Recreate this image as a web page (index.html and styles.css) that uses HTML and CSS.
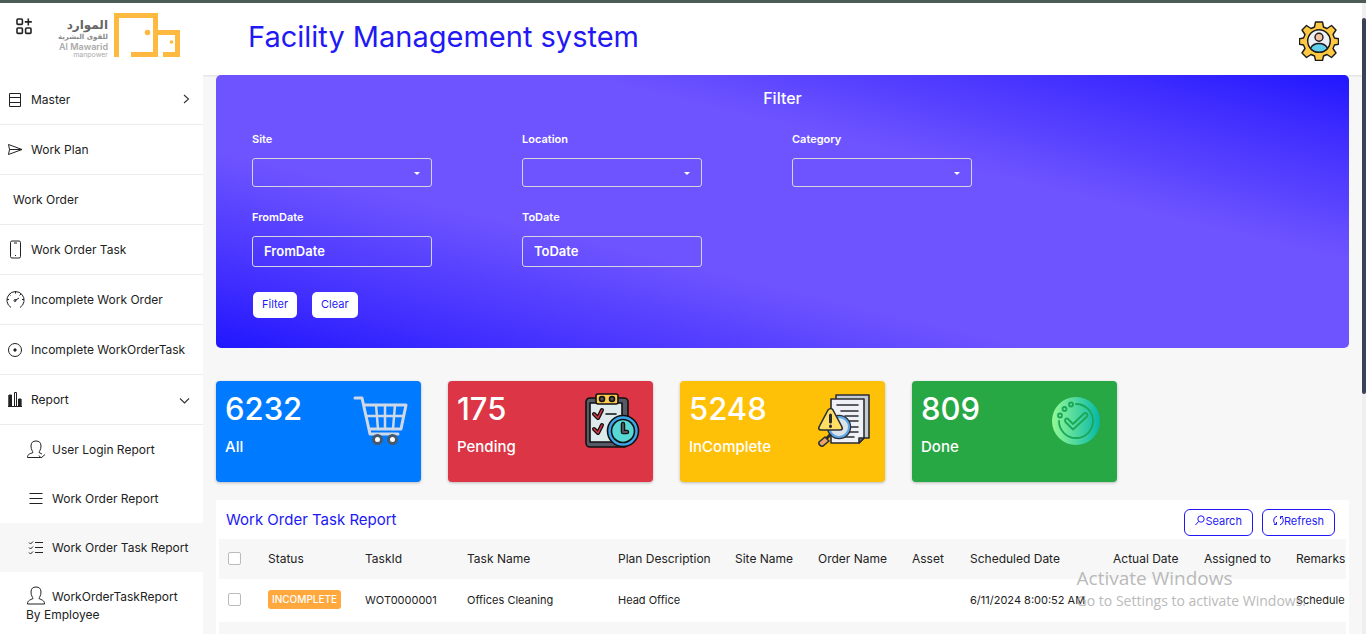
FILE: index.html
```html
<!DOCTYPE html>
<html lang="en">
<head>
<meta charset="utf-8">
<title>Facility Management system</title>
<link rel="stylesheet" href="styles.css">
</head>
<body>
<div class="app">
  <header class="header">
    <button class="menu-toggle" type="button" aria-label="Toggle menu">
      <svg width="16" height="17" viewBox="0 0 16 17" fill="none" stroke="#222" stroke-width="1.6"><rect x="1" y="1" width="5.4" height="5.4" rx="1"/><rect x="1" y="10" width="5.4" height="5.4" rx="1"/><rect x="9.6" y="10" width="5.4" height="5.4" rx="1"/><path d="M12.3 .4v7M8.8 3.9h7"/></svg>
    </button>
    <svg class="logo" width="134" height="48" viewBox="0 0 134 48" role="img" aria-label="Al Mawarid manpower">
      <g text-anchor="end">
        <text x="61" y="18" class="logo-ar">الموارد</text>
        <text x="61" y="28" class="logo-ar-sub">للقوى البشرية</text>
        <text x="61" y="39" class="logo-en">Al Mawarid</text>
        <text x="61" y="46" class="logo-en-sub">manpower</text>
      </g>
      <path d="M67 46V2h44v17h22v27h-17v-5h12V24h-17v22H84v-5h22V7H72v39z" fill="#fdb940"/>
      <circle cx="100.500" cy="21.500" r="2.800" fill="#fdb940"/><circle cx="124.500" cy="31" r="1.800" fill="#fdb940"/>
    </svg>
    <h1 class="app-title">Facility Management system</h1>
    <button class="profile" type="button" aria-label="Profile settings">
      <svg width="40" height="40" viewBox="0 0 40 40" stroke="#1b1b1b" stroke-width="1.4" stroke-linejoin="round">
        <path fill="#ffc843" d="M16.500 1h7l1 5 3.500 1.500 4.500-3 4.500 4.500-3 4.500 1.500 3.500 4 .8v5.400l-4 .8-1.500 3.500 3 4.500-4.500 4.500-4.500-3-3.500 1.500-1 4.500h-7l-1-4.500-3.500-1.500-4.500 3L3 32l3-4.500L4.500 24l-4-.8v-5.400l4-.8L6 13.500 3 9l4.500-4.500 4.500 3L15.500 6z"/>
        <circle cx="20" cy="20" r="11.300" fill="#edf1f6"/>
        <path d="M11.500 27.500c1.500-3.500 4.500-5 8.500-5s7 1.500 8.500 5c-4.500 5-12.500 5-17 0z" fill="#60d0ef"/>
        <circle cx="20" cy="16.300" r="4" fill="#f1c3a0"/>
      </svg>
    </button>
  </header>

  <div class="body">
    <nav class="sidebar" aria-label="Main">
      <ul class="menu">
        <li><a class="menu-link" href="#"><svg class="icon" viewBox="0 0 20 20"><path d="M4.500 3.500h11v13h-11zM4.500 7.500h11M4.500 12.500h11"/></svg>Master<svg class="chevron" width="12" height="12" viewBox="0 0 12 12"><path d="M5 1l4.500 4L5 9"/></svg></a></li>
        <li><a class="menu-link" href="#"><svg class="icon" viewBox="0 0 20 20"><path d="M3.500 4.500l13.500 5-13.500 5 1-5zM4.500 9.500H17"/></svg>Work Plan</a></li>
        <li><a class="menu-link no-icon" href="#">Work Order</a></li>
        <li><a class="menu-link" href="#"><svg class="icon" viewBox="0 0 20 20"><rect x="5.500" y="1" width="10" height="17" rx="1.500"/><path d="M9 3h3M10 15.500h1"/></svg>Work Order Task</a></li>
        <li><a class="menu-link" href="#"><svg class="icon" viewBox="0 0 20 20"><path d="M6 17.500a8.600 8.600 0 1 1 9 0M10 10.500L14 8M10.500 1v2.500M2 9.500h2M4 4l1.500 1.500M16 4l-1.500 1.500M19 9.500h-2"/><circle cx="10" cy="10.500" r="1"/></svg>Incomplete Work Order</a></li>
        <li><a class="menu-link" href="#"><svg class="icon" viewBox="0 0 20 20"><circle cx="10" cy="10" r="6.500"/><circle cx="10" cy="10" r="1.200" fill="#222"/></svg>Incomplete WorkOrderTask</a></li>
        <li><a class="menu-link" href="#" aria-expanded="true"><svg class="icon" viewBox="0 0 20 20"><path d="M4 16.500V5h2.500v11.500zM9.500 16.500v-14h2v14zM13.500 16.500V9H16v7.500z"/><path d="M5 5v11M14.800 9v7" stroke-width="3"/><path d="M3 16.500h14"/></svg>Report<svg class="chevron" width="12" height="12" viewBox="0 0 12 12"><path d="M1 4.500L5.500 9 10 4.500"/></svg></a>
          <ul class="submenu">
            <li><a class="submenu-link" href="#"><svg class="icon" viewBox="0 0 20 20"><path d="M14 17.500H1.500c0-4 3-3.500 5.500-5-.2-1.500-2-2.500-2-6.500C5 2.500 7 1 10 1s5 1.500 5 5c0 4-1.800 5-2 6.500l3 1.500M13 15.500l2 2.500 4-3.500"/></svg>User Login Report</a></li>
            <li><a class="submenu-link" href="#"><svg class="icon" viewBox="0 0 20 20"><path d="M3.500 4.500h13M3.500 9.500h13M3.500 14.500h13"/></svg>Work Order Report</a></li>
            <li><a class="submenu-link active" href="#" aria-current="page"><svg class="icon" viewBox="0 0 20 20"><path d="M9 4.500h8M9 9.500h8M9 14.500h8M3 4.500L4.500 6 7 3.500M3 9.500L4.500 11 7 8.500M3 14.500L4.500 16 7 13.500"/></svg>Work Order Task Report</a></li>
            <li><a class="submenu-link wrap" href="#"><svg class="icon" viewBox="0 0 20 20"><path d="M1.500 18c0-4 3-4 5.500-5.500C6.800 11 5 10 5 6c0-3.500 2-5 5-5s5 1.500 5 5c0 4-1.800 5-2 6.500 2.500 1.500 5.500 1.500 5.500 5.500z"/></svg>WorkOrderTaskReport By Employee</a></li>
          </ul>
        </li>
      </ul>
    </nav>

    <main class="content">
      <form class="filter">
        <h2 class="filter-title">Filter</h2>
        <div class="fields">
          <div class="field"><label for="site">Site</label><div class="select-box"><select id="site"><option></option></select></div></div>
          <div class="field"><label for="location">Location</label><div class="select-box"><select id="location"><option></option></select></div></div>
          <div class="field"><label for="category">Category</label><div class="select-box"><select id="category"><option></option></select></div></div>
          <div class="field"><label for="from">FromDate</label><input id="from" type="text" placeholder="FromDate"></div>
          <div class="field"><label for="to">ToDate</label><input id="to" type="text" placeholder="ToDate"></div>
        </div>
        <div class="filter-actions">
          <button class="btn-light" type="button">Filter</button>
          <button class="btn-light" type="button">Clear</button>
        </div>
      </form>

      <section class="cards" aria-label="Task totals">
        <article class="card all">
          <div><p class="count">6232</p><p class="card-label">All</p></div>
          <svg width="56" height="56" viewBox="0 0 56 56" fill="none" stroke="#cfd8e6" stroke-width="3" stroke-linecap="round" stroke-linejoin="round"><path d="M3 5h7l8 36h28M12 12h42l-5 24H17"/><path stroke-width="2.500" d="M14 23h37M24 12l2 24M33 12v24M43 12l-2 24"/><g fill="#fff" stroke="#455a6b"><circle cx="25.500" cy="46.500" r="4"/><circle cx="40.500" cy="46.500" r="4"/></g></svg>
        </article>
        <article class="card pending">
          <div><p class="count">175</p><p class="card-label">Pending</p></div>
          <svg width="56" height="56" viewBox="0 0 56 56" fill="none" stroke="#111" stroke-width="1.600" stroke-linecap="round" stroke-linejoin="round"><rect x="2" y="5" width="42" height="49" rx="4" fill="#555a66"/><path d="M6 10h32v39H6z" fill="#dfeaec"/><rect x="12" y="1" width="22" height="10" rx="2" fill="#ffcb4f"/><circle cx="18" cy="6" r="2.500" fill="#555"/><circle cx="28" cy="6" r="2.500" fill="#555"/><path d="M22 21h10"/><g stroke-width="4"><path d="M10 21l4 4 4-8M10 36l4 4 4-8"/></g><g stroke="#dc3545" stroke-width="1.600"><path d="M10 21l4 4 4-8M10 36l4 4 4-8"/></g><circle cx="39" cy="38" r="15.500" fill="#3ba6ea"/><circle cx="39" cy="38" r="11.500" fill="#57d8d4"/><path d="M39 31v8h4" stroke-width="4.500"/><path d="M39 31v8h4" stroke="#555a66" stroke-width="1.800"/></svg>
        </article>
        <article class="card incomplete">
          <div><p class="count">5248</p><p class="card-label">InComplete</p></div>
          <svg width="56" height="56" viewBox="0 0 56 56" fill="none" stroke="#2b2d33" stroke-width="1.600" stroke-linecap="round" stroke-linejoin="round"><path d="M20 2h33v43H20z" fill="#c5cbd2"/><path d="M15 6h33v39l-5 5H15z" fill="#eef1f5"/><path d="M43 50v-5h5z" fill="#777"/><path d="M21 12h21M25 18h17M29 23h13M31 28h11M33 34h9M31 39h11M21 44h17"/><circle cx="23" cy="34" r="10" stroke-width="4.500"/><circle cx="23" cy="34" r="10" fill="#dce4ea" stroke="#5fa8e8" stroke-width="2"/><path d="M14 42l-3 3" stroke-width="3"/><path d="M9 44l4 4-6 5c-2 1-5-2-4-4z" fill="#e9a56b"/><path d="M12 17q3-3 5 0l9 17q1 3-2 3H5q-3 0-2-3z" fill="#ffdf63"/><path d="M14.500 22v7M14.500 33v.5" stroke-width="3"/></svg>
        </article>
        <article class="card done">
          <div><p class="count">809</p><p class="card-label">Done</p></div>
          <svg width="56" height="56" viewBox="0 0 56 56" fill="none" stroke="#1ba758" stroke-width="1.800" stroke-linecap="round" stroke-linejoin="round"><defs><linearGradient id="mint"><stop stop-color="#95f994"/><stop offset="1" stop-color="#07b7a8"/></linearGradient></defs><circle cx="28" cy="28" r="24" fill="url(#mint)" stroke="none"/><path d="M28 11a17 17 0 1 1-17 17"/><circle cx="23" cy="11.500" r="2"/><circle cx="16.500" cy="16" r="2"/><circle cx="12" cy="22.500" r="2"/><path d="M20 26l5 5L36 20.500c2-1.500 4.500 1 3 3L25 36.500 17.500 29c-1.500-2 .5-4.500 2.500-3z"/></svg>
        </article>
      </section>

      <section class="panel">
        <div class="panel-head">
          <h2 class="panel-title">Work Order Task Report</h2>
          <div class="panel-actions">
            <button class="btn-outline" type="button"><svg width="10" height="11" viewBox="0 0 10 11"><circle cx="6" cy="4" r="3.200"/><path d="M3.500 6.500L.5 10"/></svg>Search</button>
            <button class="btn-outline" type="button"><svg width="11" height="11" viewBox="0 0 11 11"><path d="M4 1.200A4.500 4.500 0 0 0 3 9.500M7 9.800A4.500 4.500 0 0 0 8 1.500M1 9.500h2.500V7M10 1.500H7.500V4"/></svg>Refresh</button>
          </div>
        </div>
        <div class="table-wrap">
          <table>
            <colgroup><col class="c-check"><col class="c-status"><col class="c-id"><col class="c-task"><col class="c-plan"><col class="c-site"><col class="c-order"><col class="c-asset"><col class="c-sched"><col class="c-actual"><col class="c-assigned"><col class="c-remarks"></colgroup>
            <thead><tr><th><input type="checkbox" aria-label="Select all"></th><th>Status</th><th>TaskId</th><th>Task Name</th><th>Plan Description</th><th>Site Name</th><th>Order Name</th><th>Asset</th><th>Scheduled Date</th><th>Actual Date</th><th>Assigned to</th><th>Remarks</th></tr></thead>
            <tbody>
              <tr><td><input type="checkbox" aria-label="Select WOT0000001"></td><td><span class="badge">INCOMPLETE</span></td><td>WOT0000001</td><td>Offices Cleaning</td><td>Head Office</td><td></td><td></td><td></td><td>6/11/2024 8:00:52 AM</td><td></td><td></td><td>Schedule</td></tr>
              <tr class="striped"><td colspan="12"></td></tr>
            </tbody>
          </table>
        </div>
      </section>
    </main>
  </div>
  <div class="scroll-track"><div class="scroll-thumb"></div></div>
  <div class="watermark"><p class="watermark-title">Activate Windows</p><p>Go to Settings to activate Windows.</p></div>
</div>
</body>
</html>
```
FILE: styles.css
```css
* { box-sizing: border-box; }
body { margin: 0; font-family: Inter, "Open Sans", sans-serif; font-size: 12px; color: #222; background: #f7f7f7; }
h1, h2, p, ul { margin: 0; padding: 0; font-weight: 400; }
ul { list-style: none; }
a { color: inherit; text-decoration: none; }
button, input, select { font: inherit; }
button { padding: 0; cursor: pointer; }

.app { position: relative; display: flex; flex-direction: column; height: 100vh; overflow: hidden; border-top: 3px solid #4b5b55; }

.header { display: flex; flex: none; align-items: flex-start; height: 72px; padding: 0 27px 0 16px; background: #fff; box-shadow: 0 1px 2px rgba(0, 0, 0, .1); }
.menu-toggle, .profile { border: 0; background: none; }
.menu-toggle { margin-top: 15px; }
.menu-toggle svg, .profile svg { display: block; }
.logo { margin: 8px 0 0 15px; }
.logo-ar { font: 700 12px "DejaVu Sans", sans-serif; fill: #666; }
.logo-ar-sub { font: 700 7px "DejaVu Sans", sans-serif; fill: #8a8a8a; }
.logo-en { font: 600 9px Inter, sans-serif; fill: #aaa; }
.logo-en-sub { font: 7px Inter, sans-serif; fill: #aaa; }
.app-title { margin: 14px 0 0 67px; font-size: 29px; line-height: 40px; color: #2218f5; }
.profile { margin: 18px 0 0 auto; }

.body { display: flex; flex: 1; min-height: 0; }
.sidebar { flex: none; width: 203px; background: #fff; overflow: hidden; }
.menu-link { display: flex; align-items: center; gap: 6px; height: 50px; padding: 0 12px 0 5px; border-bottom: 1px solid #ececec; white-space: nowrap; }
.no-icon { padding-left: 13px; }
.icon { flex: none; width: 20px; height: 20px; fill: none; stroke: #222; stroke-width: 1; }
.chevron { flex: none; margin-left: auto; fill: none; stroke: #333; stroke-width: 1.1; }
.submenu-link { display: flex; align-items: center; gap: 6px; height: 49px; padding: 0 8px 0 26px; white-space: nowrap; }
.active { background: #f7f7f7; }
.wrap { display: block; height: auto; padding-top: 14px; line-height: 18px; white-space: normal; }
.wrap .icon { margin-right: 6px; vertical-align: -5px; }

.content { flex: 1; min-width: 0; padding: 0 17px 0 13px; }
.filter { padding: 11px 36px 30px; border-radius: 5px; color: #fff; background: linear-gradient(to top right, #2016ff, #3e2cff 12%, #6e54ff 36%, #6e54ff 66%, #3e2cff 89%, #2016ff); }
.filter-title { margin-bottom: 20px; font-size: 16px; font-weight: 500; line-height: 24px; text-align: center; }
.fields { display: grid; grid-template-columns: repeat(3, 180px); gap: 21px 90px; }
.field { display: flex; flex-direction: column; gap: 10px; }
.field label { font-size: 11px; font-weight: 600; line-height: 18px; }
.select-box { position: relative; }
.select-box::after { content: ""; position: absolute; top: 14px; right: 12px; border: 3px solid transparent; border-top-color: #fff; border-bottom: 0; pointer-events: none; }
.field select, .field input { display: block; width: 100%; height: 29px; padding: 0 11px 2px; border: 1px solid #d5d5e2; border-radius: 3px; background: transparent; color: #fff; font-size: 13px; font-weight: 600; appearance: none; }
.field input { height: 31px; }
.field input::placeholder { color: #fff; opacity: 1; }
.filter-actions { display: flex; gap: 15px; margin: 25px 0 0 1px; }
.btn-light { height: 26px; padding: 0 9px 2px; border: 0; border-radius: 5px; background: #fff; color: #2218f5; font-size: 11px; }

.cards { display: grid; grid-template-columns: repeat(4, 205px); gap: 27px; margin-top: 33px; }
.card { display: flex; justify-content: space-between; height: 101px; padding: 10px 13px 0 9px; border-radius: 4px; color: #fff; box-shadow: 0 1px 3px rgba(0, 0, 0, .25); }
.card svg { margin-top: 2px; }
.all { background: #007bff; }
.pending { background: #dc3545; }
.incomplete { background: #ffc107; }
.done { background: #28a745; }
.count { font-size: 31px; font-weight: 500; line-height: 36px; }
.card-label { margin-top: 9px; font-size: 15px; font-weight: 500; line-height: 22px; }

.panel { min-height: 200px; margin-top: 18px; padding: 0 3px; background: #fff; }
.panel-head { display: flex; align-items: flex-start; justify-content: space-between; height: 39px; padding: 9px 11px 0 7px; }
.panel-title { font-size: 15px; line-height: 22px; color: #2218f5; }
.panel-actions { display: flex; gap: 9px; }
.btn-outline { height: 27px; padding: 0 10px 3px; border: 1px solid #2218f5; border-radius: 6px; background: #fff; color: #2218f5; font-size: 11px; }
.btn-outline svg { fill: none; stroke: #2218f5; stroke-width: 1; vertical-align: -1px; }
.table-wrap { overflow: hidden; }
table { width: 100%; border-collapse: collapse; table-layout: fixed; font-size: 11px; }
th, td { height: 43px; padding: 0 0 2px; font-weight: 400; text-align: left; white-space: nowrap; }
th { height: 40px; background: #f7f7f7; font-size: 12px; }
.striped { background: #f7f7f7; }
th:first-child, td:first-child { padding-left: 9px; }
td input, th input { display: block; width: 13px; height: 13px; margin: 0; border: 1px solid #bbb; border-radius: 2px; background: #fff; appearance: none; }
.c-check { width: 49px; }
.c-status { width: 97px; }
.c-id { width: 102px; }
.c-task { width: 151px; }
.c-plan { width: 117px; }
.c-site { width: 83px; }
.c-order { width: 94px; }
.c-asset { width: 58px; }
.c-sched { width: 143px; }
.c-actual { width: 91px; }
.c-assigned { width: 92px; }
.c-remarks { width: 50px; }
.badge { display: inline-block; padding: 0 4px; border-radius: 3px; background: #ffa83e; color: #fff; font-size: 10px; font-weight: 500; line-height: 19px; }

.scroll-track { position: absolute; top: 0; right: 0; bottom: 0; width: 4px; padding-top: 15px; background: #efefef; }
.scroll-thumb { height: 61%; border-radius: 2px; background: #3a4256; }
.watermark { position: absolute; right: 60px; bottom: 22px; font-family: "Open Sans", sans-serif; font-size: 14px; line-height: 22px; color: #aaa; opacity: .8; pointer-events: none; }
.watermark-title { font-size: 19px; line-height: 24px; }
```
